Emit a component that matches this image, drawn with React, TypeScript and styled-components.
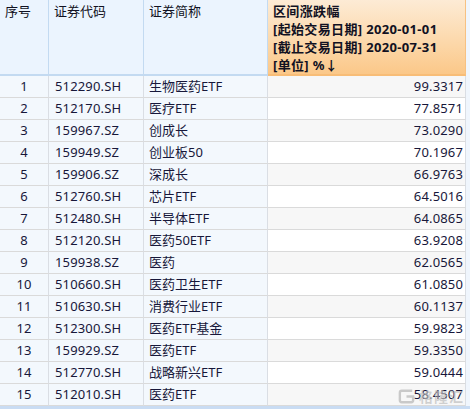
import React from "react";
import styled, { createGlobalStyle } from "styled-components";

const Global = createGlobalStyle`
  html, body { margin: 0; padding: 0; background: #ffffff; }
  body { font-family: "Noto Sans", "Noto Sans CJK SC", sans-serif; }
`;

const rows: [string, string, string, string][] = [
  ["1", "512290.SH", "生物医药ETF", "99.3317"],
  ["2", "512170.SH", "医疗ETF", "77.8571"],
  ["3", "159967.SZ", "创成长", "73.0290"],
  ["4", "159949.SZ", "创业板50", "70.1967"],
  ["5", "159906.SZ", "深成长", "66.9763"],
  ["6", "512760.SH", "芯片ETF", "64.5016"],
  ["7", "512480.SH", "半导体ETF", "64.0865"],
  ["8", "512120.SH", "医药50ETF", "63.9208"],
  ["9", "159938.SZ", "医药", "62.0565"],
  ["10", "510660.SH", "医药卫生ETF", "61.0850"],
  ["11", "510630.SH", "消费行业ETF", "60.1137"],
  ["12", "512300.SH", "医药ETF基金", "59.9823"],
  ["13", "159929.SZ", "医药ETF", "59.3350"],
  ["14", "512770.SH", "战略新兴ETF", "59.0444"],
  ["15", "512010.SH", "医药ETF", "58.4507"],
];

const Wrap = styled.div`
  position: relative;
  width: 470px;
  height: 409px;
  overflow: hidden;
  background: #f3f8fd;
`;

const Grid = styled.div`
  display: grid;
  grid-template-columns: 49px 95px 124px 198px 4px;
  grid-auto-rows: 22px;
  grid-template-rows: 76px;
  font-size: 13px;
  color: #17173a;
`;

const HeadCell = styled.div<{ $accent?: boolean }>`
  box-sizing: border-box;
  padding: 2px 5px;
  line-height: 18px;
  border-right: 1px solid ${(p) => (p.$accent ? "#f7c182" : "#c3daf1")};
  border-bottom: 2px solid ${(p) => (p.$accent ? "#f8bd77" : "#c3daf1")};
  background: ${(p) =>
    p.$accent
      ? "linear-gradient(to bottom, #fdebd5 0%, #fcd7a8 60%, #fbc889 100%)"
      : "#ebf4fe"};
  font-weight: ${(p) => (p.$accent ? 700 : 400)};
  letter-spacing: ${(p) => (p.$accent ? "0.35px" : "0")};
  color: #111122;
  white-space: nowrap;
`;

const Cell = styled.div<{ $align?: "left" | "center" | "right"; $bg?: string }>`
  box-sizing: border-box;
  height: 22px;
  line-height: 21px;
  padding: 0 ${(p) => (p.$align === "right" ? "2px" : "6px")} 0 ${(p) =>
      p.$align === "right" ? "0" : "6px"};
  text-align: ${(p) => p.$align || "left"};
  background: ${(p) => p.$bg || "#f3f8fd"};
  border-right: 1px solid #dadee4;
  border-bottom: 1px solid #dadada;
  white-space: nowrap;
  overflow: hidden;
  letter-spacing: 0.15px;
`;

const NameCell = styled(Cell)`
  padding-left: 5px;
  letter-spacing: 0;
`;

const Edge = styled.div`
  background: #f0f6fd;
`;

const BottomLine = styled.div`
  position: absolute;
  left: 0;
  right: 0;
  top: 406px;
  height: 3px;
  background: #c9dcf3;
`;

const Watermark = styled.div`
  position: absolute;
  left: 397px;
  top: 386px;
  display: flex;
  align-items: center;
  gap: 3px;
  color: rgba(190, 190, 190, 0.7);
  font-size: 14px;
  font-weight: 700;
  pointer-events: none;
  letter-spacing: 1px;
`;

export default function App() {
  return (
    <Wrap>
      <Global />
      <Grid>
        <HeadCell>序号</HeadCell>
        <HeadCell>证券代码</HeadCell>
        <HeadCell>证券简称</HeadCell>
        <HeadCell $accent>
          区间涨跌幅
          <br />
          [起始交易日期] 2020-01-01
          <br />
          [截止交易日期] 2020-07-31
          <br />
          [单位] %↓
        </HeadCell>
        <Edge />
        {rows.map((r, i) => (
          <React.Fragment key={r[0]}>
            <Cell $align="center">{r[0]}</Cell>
            <Cell>{r[1]}</Cell>
            <NameCell>{r[2]}</NameCell>
            <Cell $align="right" $bg={i % 2 === 0 ? "#f7f7f7" : "#ffffff"}>
              {r[3]}
            </Cell>
            <Edge />
          </React.Fragment>
        ))}
      </Grid>
      <BottomLine />
      <Watermark>
        <svg width="19" height="19" viewBox="0 0 20 20">
          <path
            d="M16 4 H5 Q3 4 3 6 V14 Q3 16 5 16 H15 Q17 16 17 14 V10 H10"
            fill="none"
            stroke="rgba(185,185,185,0.75)"
            strokeWidth="2.5"
          />
        </svg>
        <span>格隆汇</span>
      </Watermark>
    </Wrap>
  );
}
